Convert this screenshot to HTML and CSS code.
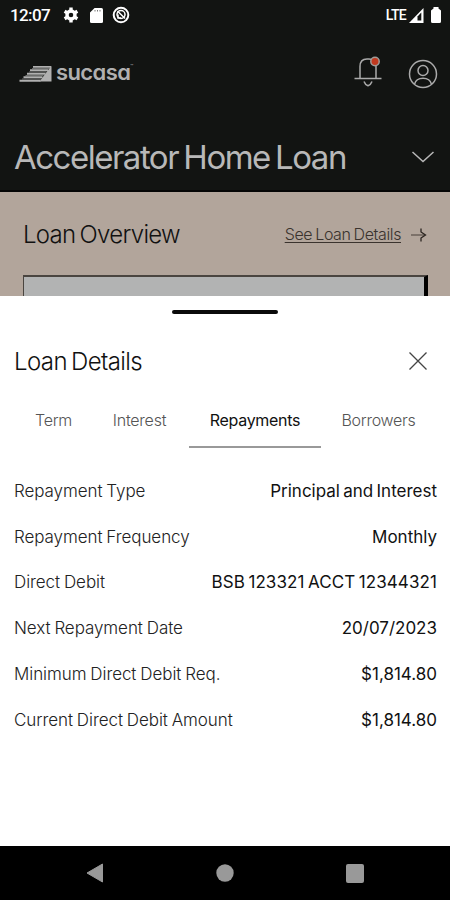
FILE: index.html
```html
<!DOCTYPE html>
<html lang="en">
<head>
  <meta charset="UTF-8">
  <title>Sucasa</title>
  <link rel="stylesheet" href="styles.css">
</head>
<body>
  <header>
    <div class="status-bar">
      <span class="clock">12:07</span>
      <svg class="gear" width="16" height="16" viewBox="0 0 16 16">
        <circle cx="8" cy="8" r="4" fill="none" stroke="#fff" stroke-width="3.4"/>
        <path d="M8 .6v3M8 12.4v3M1.6 4.3l2.6 1.5M11.8 10.2l2.6 1.5M1.6 11.7l2.6-1.5M11.8 5.8l2.6-1.5" stroke="#fff" stroke-width="3.4"/>
      </svg>
      <svg class="sd-card" width="13" height="15" viewBox="0 0 13 15">
        <path d="M4.6 0H11.5q1.5 0 1.5 1.5v12q0 1.5-1.5 1.5H1.5Q0 15 0 13.5V4.6z" fill="#fff"/>
        <path d="M5 2v1.5M7.5 2v1.5M10 2v1.5" stroke="#777"/>
      </svg>
      <svg class="sync" width="18" height="18" viewBox="0 0 18 18" fill="none" stroke="#fff">
        <circle cx="9" cy="9" r="7.3" stroke-width="2"/>
        <circle cx="9" cy="8.5" r="4" stroke-width="1.5"/>
        <path d="M5.5 5l7.5 7.5M6 8.5v3.5h3" stroke-width="1.5"/>
      </svg>
      <span class="network">LTE</span>
      <svg class="signal" width="15" height="15" viewBox="0 0 15 15">
        <path d="M14.5 0v15H0z" fill="#fff"/>
        <path d="M12.3 4.5v8H8.5V8.5z" fill="#121412"/>
      </svg>
      <svg class="battery" width="10" height="16" viewBox="0 0 10 16">
        <path d="M2.5 0h5v1.5L10 3.5v11q0 1.5-1.5 1.5h-7Q0 16 0 14.5v-11L2.5 1.5z" fill="#fff"/>
      </svg>
    </div>
    <div class="brand-bar">
      <svg class="logo-mark" width="33" height="16" viewBox="0 0 33 16">
        <path d="M32.5 0v15.5H20.5L31 1.5z" fill="#b0b0b0"/>
        <path d="M14 .8h18M11 4.2h18M8 7.7h18.5M4.5 11.2H23.5M.5 14.7h21" stroke="#b0b0b0" stroke-width="1.9"/>
        <path d="M13 2.5h17M10 6h17M6.5 9.5h18M3 13h19" stroke="#6c6d6c"/>
      </svg>
      <span class="logo-text">sucasa</span><span class="logo-tm">™</span>
      <svg class="bell" width="30" height="32" viewBox="0 0 30 32" fill="none" stroke="#aaa" stroke-width="1.5">
        <path d="M1.5 22.5h27M7 22V10.5Q7 3 14 3h2q7 0 7 7.5V22M11 25.5q1 3 4 4.2 3-1.2 4-4.2"/>
        <circle cx="22" cy="5.5" r="4.2" fill="#c0391f" stroke="#a09c98"/>
      </svg>
      <svg class="avatar" width="30" height="30" viewBox="0 0 30 30" fill="none" stroke="#aaa" stroke-width="1.5">
        <circle cx="15" cy="15" r="13.5"/>
        <circle cx="15" cy="11.5" r="5"/>
        <path d="M6.5 25.2q1.5-6 8.500-6t8.500 6"/>
      </svg>
    </div>
    <div class="title-bar">
      <h1>Accelerator Home Loan</h1>
      <svg width="24" height="12" viewBox="0 0 24 12" fill="none" stroke="#b8b8b8" stroke-width="1.5">
        <path d="M1.5 1L12 10.5 22.5 1"/>
      </svg>
    </div>
  </header>
  <section class="overview">
    <div class="overview-head">
      <h2>Loan Overview</h2>
      <a class="details-link">See Loan Details</a>
      <svg width="18" height="14" viewBox="0 0 18 14" fill="none">
        <path d="M1 7h14" stroke="#5a504a" stroke-width="1.2"/>
        <path d="M11 .5V4l4.5 3L11 10v3.5" stroke="#2a2420" stroke-width="1.3"/>
      </svg>
    </div>
    <div class="overview-card"></div>
  </section>
  <main class="sheet">
    <div class="handle"></div>
    <div class="sheet-head">
      <h2>Loan Details</h2>
      <svg width="20" height="20" viewBox="0 0 20 20" stroke="#444" stroke-width="1.3">
        <path d="M1.5 1.5l17 17M18.5 1.5l-17 17"/>
      </svg>
    </div>
    <nav class="tabs">
      <span class="tab term">Term</span>
      <span class="tab interest">Interest</span>
      <span class="tab active">Repayments</span>
      <span class="tab borrowers">Borrowers</span>
    </nav>
    <dl class="details">
      <div class="row"><dt>Repayment Type</dt><dd>Principal and Interest</dd></div>
      <div class="row"><dt>Repayment Frequency</dt><dd>Monthly</dd></div>
      <div class="row"><dt>Direct Debit</dt><dd class="account">BSB 123321 ACCT 12344321</dd></div>
      <div class="row"><dt>Next Repayment Date</dt><dd>20/07/2023</dd></div>
      <div class="row"><dt>Minimum Direct Debit Req.</dt><dd>$1,814.80</dd></div>
      <div class="row"><dt>Current Direct Debit Amount</dt><dd>$1,814.80</dd></div>
    </dl>
  </main>
  <footer class="nav-bar">
    <svg width="18" height="20" viewBox="0 0 18 20"><path d="M16.5 1v18L1 10z" fill="#999" stroke="#999" stroke-linejoin="round"/></svg>
    <svg width="18" height="18" viewBox="0 0 18 18"><circle cx="9" cy="9" r="8.7" fill="#999"/></svg>
    <svg width="18" height="19" viewBox="0 0 18 19"><rect width="18" height="19" rx="2" fill="#999"/></svg>
  </footer>
</body>
</html>
```
FILE: styles.css
```css
* { box-sizing: border-box; }
body { margin: 0; width: 450px; height: 900px; overflow: hidden; display: flex; flex-direction: column; font-family: Inter, "Liberation Sans", sans-serif; font-weight: 300; background: #fff; color: #111; }
h1, h2, dl, dd { margin: 0; font-weight: 300; }
svg { display: block; flex: none; }

header { height: 192px; background: #121412; border-bottom: 2px solid #050505; color: #b8b8b8; }
.status-bar { height: 30px; display: flex; align-items: center; padding: 0 9px 0 10px; color: #fff; font-family: Roboto, sans-serif; }
.clock { width: 53px; font-size: 17px; font-weight: 500; letter-spacing: -0.6px; }
.sd-card { margin-left: 11px; }
.sync { margin-left: 9px; }
.network { margin-left: auto; font-size: 14px; font-weight: 500; letter-spacing: -0.7px; }
.signal { margin-left: 3px; }
.battery { margin-left: 7px; }

.brand-bar { height: 86px; display: flex; align-items: center; padding: 0 12px 0 19px; }
.logo-mark { margin-top: 1px; }
.logo-text { margin: -2px 0 0 4px; font-size: 22px; font-weight: 600; letter-spacing: -0.6px; font-feature-settings: "cv11"; color: #b0b0b0; }
.logo-tm { margin-top: -14px; font-size: 5px; }
.bell { margin: -2px 25px 0 auto; }
.avatar { margin-top: 2px; }

.title-bar { height: 80px; display: flex; align-items: center; justify-content: space-between; padding: 2px 15px 0 14px; }
h1 { font-size: 33px; font-weight: 400; letter-spacing: -1.5px; word-spacing: -2.5px; }

.overview { height: 104px; padding: 0 22px 0 23px; overflow: hidden; background: #b2a59b; }
.overview-head { height: 83px; display: flex; align-items: center; padding-top: 2px; }
.overview-head h2 { margin-right: auto; font-size: 24px; letter-spacing: -0.7px; word-spacing: -2px; }
.details-link { margin: -2px 9px 0 0; font-size: 16px; letter-spacing: -0.4px; word-spacing: -1px; color: #3a332e; text-decoration: underline; text-underline-offset: 2px; text-decoration-thickness: 1px; }
.overview-card { height: 60px; background: #b2b3b3; border: 2px solid #4a4540; border-left-width: 1px; border-right: 4px solid #000; }

.sheet { height: 550px; background: #fff; }
.handle { width: 106px; height: 4px; margin: 14px auto 0 172px; border-radius: 2px; background: #0a0a0a; }
.sheet-head { height: 93px; display: flex; align-items: center; justify-content: space-between; padding: 0 22px 0 14px; }
.sheet-head h2 { margin-top: 1px; font-size: 24px; letter-spacing: -0.6px; word-spacing: -2px; }
.tabs { height: 41px; display: flex; margin-left: 17px; }
.tab { display: flex; justify-content: center; width: 73px; padding-top: 3px; font-size: 16px; letter-spacing: -0.25px; color: #555; }
.interest { width: 99px; }
.active { width: 132px; font-weight: 400; letter-spacing: -0.3px; color: #111; border-bottom: 2px solid #999; }
.borrowers { width: 115px; }
.details { padding: 20px 13px 0 14px; }
.row { height: 45.8px; display: flex; align-items: center; justify-content: space-between; font-size: 17px; }
.row dt { letter-spacing: -0.07px; word-spacing: -0.8px; color: #222; }
.row dd { font-weight: 400; letter-spacing: 0; word-spacing: -1.5px; color: #111; }
.row .account { letter-spacing: 0.1px; }

.nav-bar { height: 54px; display: flex; align-items: center; justify-content: space-between; padding: 0 86px; background: #000; }
```
